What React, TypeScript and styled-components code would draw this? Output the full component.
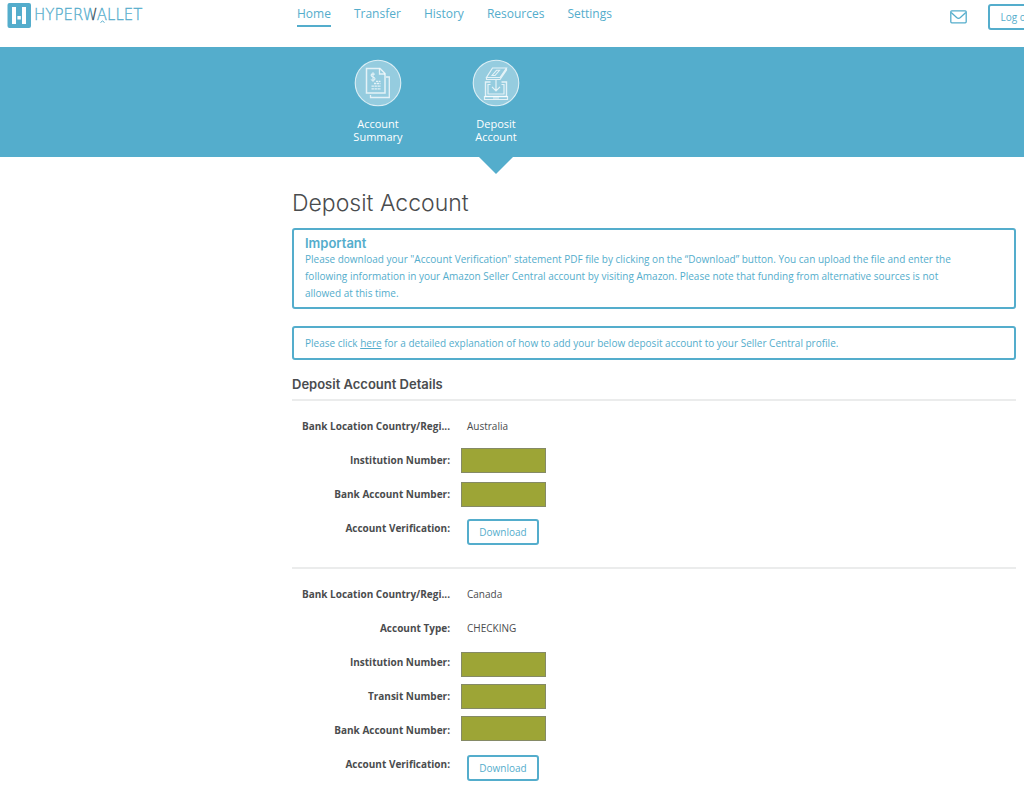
import React from 'react';
import styled, { createGlobalStyle, css } from 'styled-components';

const blue = '#54adcc';
const ink = '#4a4c4e';

const GlobalStyle = createGlobalStyle`
  * { box-sizing: border-box; }
  body {
    margin: 0;
    background: #fff;
    color: ${ink};
    font-family: 'Open Sans', sans-serif;
    font-size: 10px;
    line-height: 17px;
  }
  h1, h2, p, dl, dd, dt { margin: 0; }
`;

const Header = styled.header`
  display: flex;
  align-items: flex-start;
  height: 47px;
  overflow: hidden;
`;

const LogoLink = styled.a`
  flex: 0 0 297px;
  padding: 2px 0 0 7px;
  line-height: 0;
`;

const Nav = styled.nav`
  display: flex;
  gap: 23px;
  padding-top: 5px;
`;

const NavLink = styled.a<{ $active?: boolean }>`
  padding-bottom: 2px;
  border-bottom: 2px solid ${(p) => (p.$active ? blue : 'transparent')};
  color: ${blue};
  font-size: 12px;
  line-height: 18px;
  text-decoration: none;
`;

const Actions = styled.div`
  display: flex;
  align-items: center;
  gap: 21px;
  margin-left: auto;
  margin-right: -24px;
  padding-top: 4px;
`;

const MailLink = styled.a`
  line-height: 0;
`;

const outline = css`
  border: 2px solid ${blue};
  border-radius: 3px;
  background: #fff;
  color: ${blue};
`;

const OutlineButton = styled.button<{ $width: number }>`
  ${outline}
  flex: none;
  width: ${(p) => p.$width}px;
  height: 26px;
  padding: 0;
  font: 10px/20px 'Open Sans', sans-serif;
  white-space: nowrap;
  cursor: pointer;
`;

const Banner = styled.div`
  display: flex;
  gap: 48px;
  height: 110px;
  padding: 12px 0 0 343px;
  background: ${blue};
`;

const Tab = styled.a`
  position: relative;
  display: flex;
  flex-direction: column;
  align-items: center;
  gap: 10px;
  width: 70px;
  height: 98px;
  color: #fff;
  font-size: 11px;
  line-height: 13px;
  text-align: center;
  text-decoration: none;
`;

const Pointer = styled.span`
  position: absolute;
  top: 100%;
  left: 50%;
  margin-left: -17px;
  border: 17px solid transparent;
  border-top-color: ${blue};
  border-bottom: 0;
`;

const Main = styled.main`
  padding: 32px 8px 24px 292px;
`;

const Title = styled.h1`
  margin-bottom: 11px;
  font-family: Inter, sans-serif;
  font-size: 23px;
  font-weight: 300;
  line-height: 28px;
`;

const Notice = styled.section`
  ${outline}
  margin-bottom: 17px;
  padding: 6px 48px 5px 11px;
`;

const NoticeLine = styled(Notice)`
  padding: 7px 11px 6px;
`;

const NoticeTitle = styled.h2`
  font-family: Inter, sans-serif;
  font-size: 13px;
  font-weight: 600;
  line-height: 15px;
`;

const InlineLink = styled.a`
  color: inherit;
`;

const SectionTitle = styled.h2`
  padding-bottom: 8px;
  font-family: Inter, sans-serif;
  font-size: 13px;
  font-weight: 600;
  line-height: 14px;
`;

const Account = styled.section`
  padding: 8px 0 22px;
  border-top: 2px solid #ebecec;
`;

const Group = styled.div`
  display: flex;
  align-items: center;
`;

const Labels = styled.div`
  flex: 0 0 158px;
  text-align: right;
`;

const Label = styled.div`
  height: 34px;
  font-weight: 700;
  line-height: 34px;
  white-space: nowrap;
`;

const Value = styled.div`
  padding-left: 17px;
  line-height: 34px;
`;

const ButtonValue = styled(Value)`
  padding-top: 8px;
  line-height: 0;
`;

const Masks = styled.div<{ $gap: number }>`
  display: flex;
  flex-direction: column;
  gap: ${(p) => p.$gap}px;
  padding-left: 11px;
`;

const Mask = styled.div`
  width: 85px;
  height: 25px;
  border: 1px solid #858a66;
  background: #9da536;
`;

const Logo = () => (
  <svg width="142" height="28" viewBox="0 0 142 28" role="img" aria-label="Hyperwallet">
    <defs>
      <linearGradient id="wFill" gradientUnits="userSpaceOnUse" x1="78" y1="0" x2="92" y2="0">
        <stop offset="0.35" stopColor={blue} />
        <stop offset="0.6" stopColor="#33484f" />
        <stop offset="0.8" stopColor="#33484f" />
        <stop offset="1" stopColor={blue} />
      </linearGradient>
    </defs>
    <rect x="0.5" y="1" width="23.5" height="25" rx="2" fill={blue} />
    <path d="M5 5h4v17H5zM15 5h4v17h-4zM10.4 14h3.4v3.6h-3.4z" fill="#fff" />
    <text x="27" y="18" fontFamily="DejaVu Sans" fontWeight="200" fontSize="15" fill={blue} stroke={blue} strokeWidth="0.3">
      HYPER<tspan fill="url(#wFill)" stroke="url(#wFill)">W</tspan>ALLET
    </text>
    <path d="M93.5 20.5l2-1.5 2 1.5" fill="none" stroke={blue} />
  </svg>
);

const MailIcon = () => (
  <svg width="17" height="14" viewBox="0 0 17 14" fill="none" stroke={blue} strokeWidth="1.3">
    <rect x="0.8" y="0.8" width="15.4" height="12" rx="1" />
    <path d="M1.2 2.6 6.6 7.6Q8.5 9.2 10.4 7.6L15.8 2.6" />
  </svg>
);

const Disc = ({ children }: { children: React.ReactNode }) => (
  <svg width="48" height="48" viewBox="0 0 48 48" fill="none" stroke="#fff" strokeOpacity="0.75">
    <circle cx="24" cy="24" r="22.8" fill="#fff" fillOpacity="0.38" strokeWidth="1.1" />
    {children}
  </svg>
);

const SummaryIcon = () => (
  <Disc>
    <path d="M12.5 9.5H26l5 5V34H12.5z" strokeWidth="1.5" />
    <path d="M25.5 9.5V15H31M32 18h3.3v20.5H16.5V36" strokeWidth="1.3" />
    <path d="M20.8 15.4c-.8-.8-3.7-.9-3.7.9 0 2 3.9 1.4 3.9 3.5 0 1.9-3.2 1.8-4.1.7M19 13.2v9.6" strokeWidth="1.1" />
    <path d="M20 24.5h6.5M17.5 27.2H27M17.5 29.8H27M22 22.3h4.5" strokeWidth="1.3" strokeDasharray="2.4 .6" />
  </Disc>
);

const DepositIcon = () => (
  <Disc>
    <path d="M20.5 9H34.5L28 18.5H14.5zM14.5 18.5v2H28l6.5-9.5V9" strokeWidth="1.2" />
    <path d="m20 16.5 4.5-5.2h3L23 16.5z" strokeWidth="1.1" />
    <path d="M18.5 23h-5v14.5h21V23h-5" strokeWidth="1.4" />
    <path d="M18.5 25.5H16V35h16v-9.5h-2.5M24 21v10.5M20 27.8l4 4 4-4" strokeWidth="1.2" />
    <path d="M12.5 37.5h23v3h-23zM21 39h6" strokeWidth="1.2" />
  </Disc>
);

const navItems = ['Home', 'Transfer', 'History', 'Resources', 'Settings'];

type AccountProps = { facts: [string, string][]; hidden: string[]; gap: number };

const AccountBlock = ({ facts, hidden, gap }: AccountProps) => (
  <Account>
    {facts.map(([label, value]) => (
      <Group key={label}>
        <Labels><Label>{label}</Label></Labels>
        <Value>{value}</Value>
      </Group>
    ))}
    <Group>
      <Labels>{hidden.map((label) => <Label key={label}>{label}</Label>)}</Labels>
      <Masks $gap={gap}>{hidden.map((label) => <Mask key={label} />)}</Masks>
    </Group>
    <Group>
      <Labels><Label>Account Verification:</Label></Labels>
      <ButtonValue><OutlineButton $width={72}>Download</OutlineButton></ButtonValue>
    </Group>
  </Account>
);

export default function App() {
  return (
    <>
      <GlobalStyle />
      <Header>
        <LogoLink href="#home"><Logo /></LogoLink>
        <Nav>
          {navItems.map((item) => (
            <NavLink key={item} href={`#${item.toLowerCase()}`} $active={item === 'Home'}>{item}</NavLink>
          ))}
        </Nav>
        <Actions>
          <MailLink href="#messages" aria-label="Messages"><MailIcon /></MailLink>
          <OutlineButton $width={60}>Log out</OutlineButton>
        </Actions>
      </Header>
      <Banner>
        <Tab href="#summary"><SummaryIcon /><span>Account<br />Summary</span></Tab>
        <Tab href="#deposit"><DepositIcon /><span>Deposit<br />Account</span><Pointer /></Tab>
      </Banner>
      <Main>
        <Title>Deposit Account</Title>
        <Notice>
          <NoticeTitle>Important</NoticeTitle>
          <p>
            Please download your "Account Verification" statement PDF file by clicking on the “Download” button. You can
            upload the file and enter the following information in your Amazon Seller Central account by visiting Amazon.
            Please note that funding from alternative sources is not allowed at this time.
          </p>
        </Notice>
        <NoticeLine>
          <p>
            Please click <InlineLink href="#guide">here</InlineLink> for a detailed explanation of how to add your below
            deposit account to your Seller Central profile.
          </p>
        </NoticeLine>
        <SectionTitle>Deposit Account Details</SectionTitle>
        <AccountBlock
          facts={[['Bank Location Country/Regi...', 'Australia']]}
          hidden={['Institution Number:', 'Bank Account Number:']}
          gap={9}
        />
        <AccountBlock
          facts={[['Bank Location Country/Regi...', 'Canada'], ['Account Type:', 'CHECKING']]}
          hidden={['Institution Number:', 'Transit Number:', 'Bank Account Number:']}
          gap={7}
        />
      </Main>
    </>
  );
}
